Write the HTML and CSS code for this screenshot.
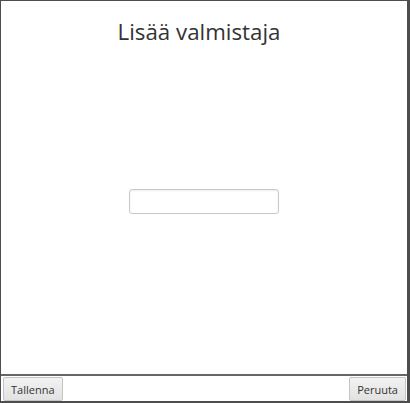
FILE: index.html
```html
<!DOCTYPE html>
<html>
<head>
<meta charset="utf-8">
<link rel="stylesheet" href="styles.css">
</head>
<body>
<div class="window">
  <div class="main">
    <h1 class="title">Lisää valmistaja</h1>
    <div class="center">
      <input class="field" type="text">
    </div>
  </div>
  <div class="footer">
    <button class="btn">Tallenna</button>
    <button class="btn">Peruuta</button>
  </div>
</div>
</body>
</html>
```

FILE: styles.css
```css
html, body {
  margin: 0;
  padding: 0;
  background: #4a4a4a;
}
.window {
  width: 410px;
  height: 403px;
  box-sizing: border-box;
  border-style: solid;
  border-color: #4d4d4d;
  border-width: 1px 3px 2px 1px;
  background: #fff;
  display: flex;
  flex-direction: column;
  font-family: "Open Sans", "Noto Sans", sans-serif;
}
.main {
  flex: 1;
  display: flex;
  flex-direction: column;
}
.title {
  margin: 0;
  padding: 14px 10px 0 0;
  text-align: center;
  font-weight: normal;
  font-size: 22.3px;
  line-height: 34px;
  color: #333;
}
.center {
  flex: 1;
  display: flex;
  align-items: center;
  justify-content: center;
  padding-bottom: 20px;
}
.field {
  width: 150px;
  height: 25px;
  box-sizing: border-box;
  border: 1px solid #c8c8c8;
  border-radius: 3px;
  box-shadow: inset 0 1px 2px rgba(0,0,0,0.08);
  background: #fff;
  outline: none;
}
.footer {
  border-top: 2px solid #666;
  display: flex;
  justify-content: space-between;
  padding: 1px 1px 0 2px;
  height: 24px;
}
.btn {
  height: 24px;
  box-sizing: border-box;
  padding: 0 7px;
  border: 1px solid #c4c4c4;
  border-radius: 2px;
  background: linear-gradient(#f2f2f2, #e2e2e2);
  font-family: "Open Sans", "Noto Sans", sans-serif;
  font-size: 11px;
  color: #333;
}
```
